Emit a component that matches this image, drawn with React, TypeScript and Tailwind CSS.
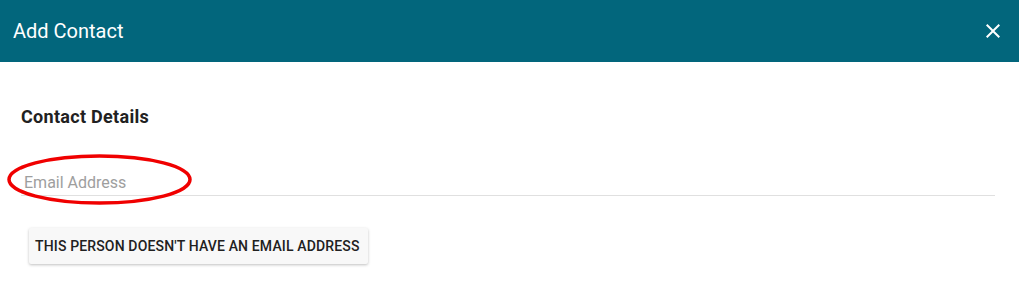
const font = { fontFamily: "Roboto, 'Liberation Sans', sans-serif" };

function CloseIcon() {
  return (
    <svg width="24" height="24" viewBox="0 0 24 24" fill="white" aria-hidden>
      <path d="M19 6.41L17.59 5 12 10.59 6.41 5 5 6.41 10.59 12 5 17.59 6.41 19 12 13.41 17.59 19 19 17.59 13.41 12z" />
    </svg>
  );
}

export default function App() {
  return (
    <div className="w-[1019px] h-[293px] bg-white overflow-hidden" style={font}>
      <header className="h-[62px] bg-[#02667c] flex items-center justify-between pl-[13px] pr-[14px]">
        <h1 className="text-[20px] text-white font-normal leading-none">Add Contact</h1>
        <button className="text-white">
          <CloseIcon />
        </button>
      </header>

      <div className="pl-[21px] pr-[24px]">
        <h2 className="mt-[44px] text-[18px] font-bold tracking-[0.3px] text-[#212121] leading-[22px]">
          Contact Details
        </h2>

        <div className="relative mt-[43px]">
          <input
            placeholder="Email Address"
            className="w-full pl-[3px] pb-[2px] text-[16px] leading-[20px] border-b border-[#e0e0e0] outline-none placeholder:text-[#9e9e9e]"
          />
          <svg
            className="absolute left-[-14px] top-[-17px] pointer-events-none"
            width="188"
            height="52"
            viewBox="0 0 188 52"
          >
            <ellipse cx="92.5" cy="25.5" rx="90.5" ry="23.5" fill="none" stroke="#f00000" strokeWidth="3.5" />
          </svg>
        </div>

        <button className="mt-[32px] ml-[8px] h-[36px] pl-[6px] pr-[8px] bg-[#f8f8f8] rounded-[2px] shadow-[0_1px_3px_rgba(0,0,0,0.25)] text-[14px] font-medium tracking-[0.15px] text-[#212121] uppercase">
          This person doesn't have an email address
        </button>
      </div>
    </div>
  );
}
